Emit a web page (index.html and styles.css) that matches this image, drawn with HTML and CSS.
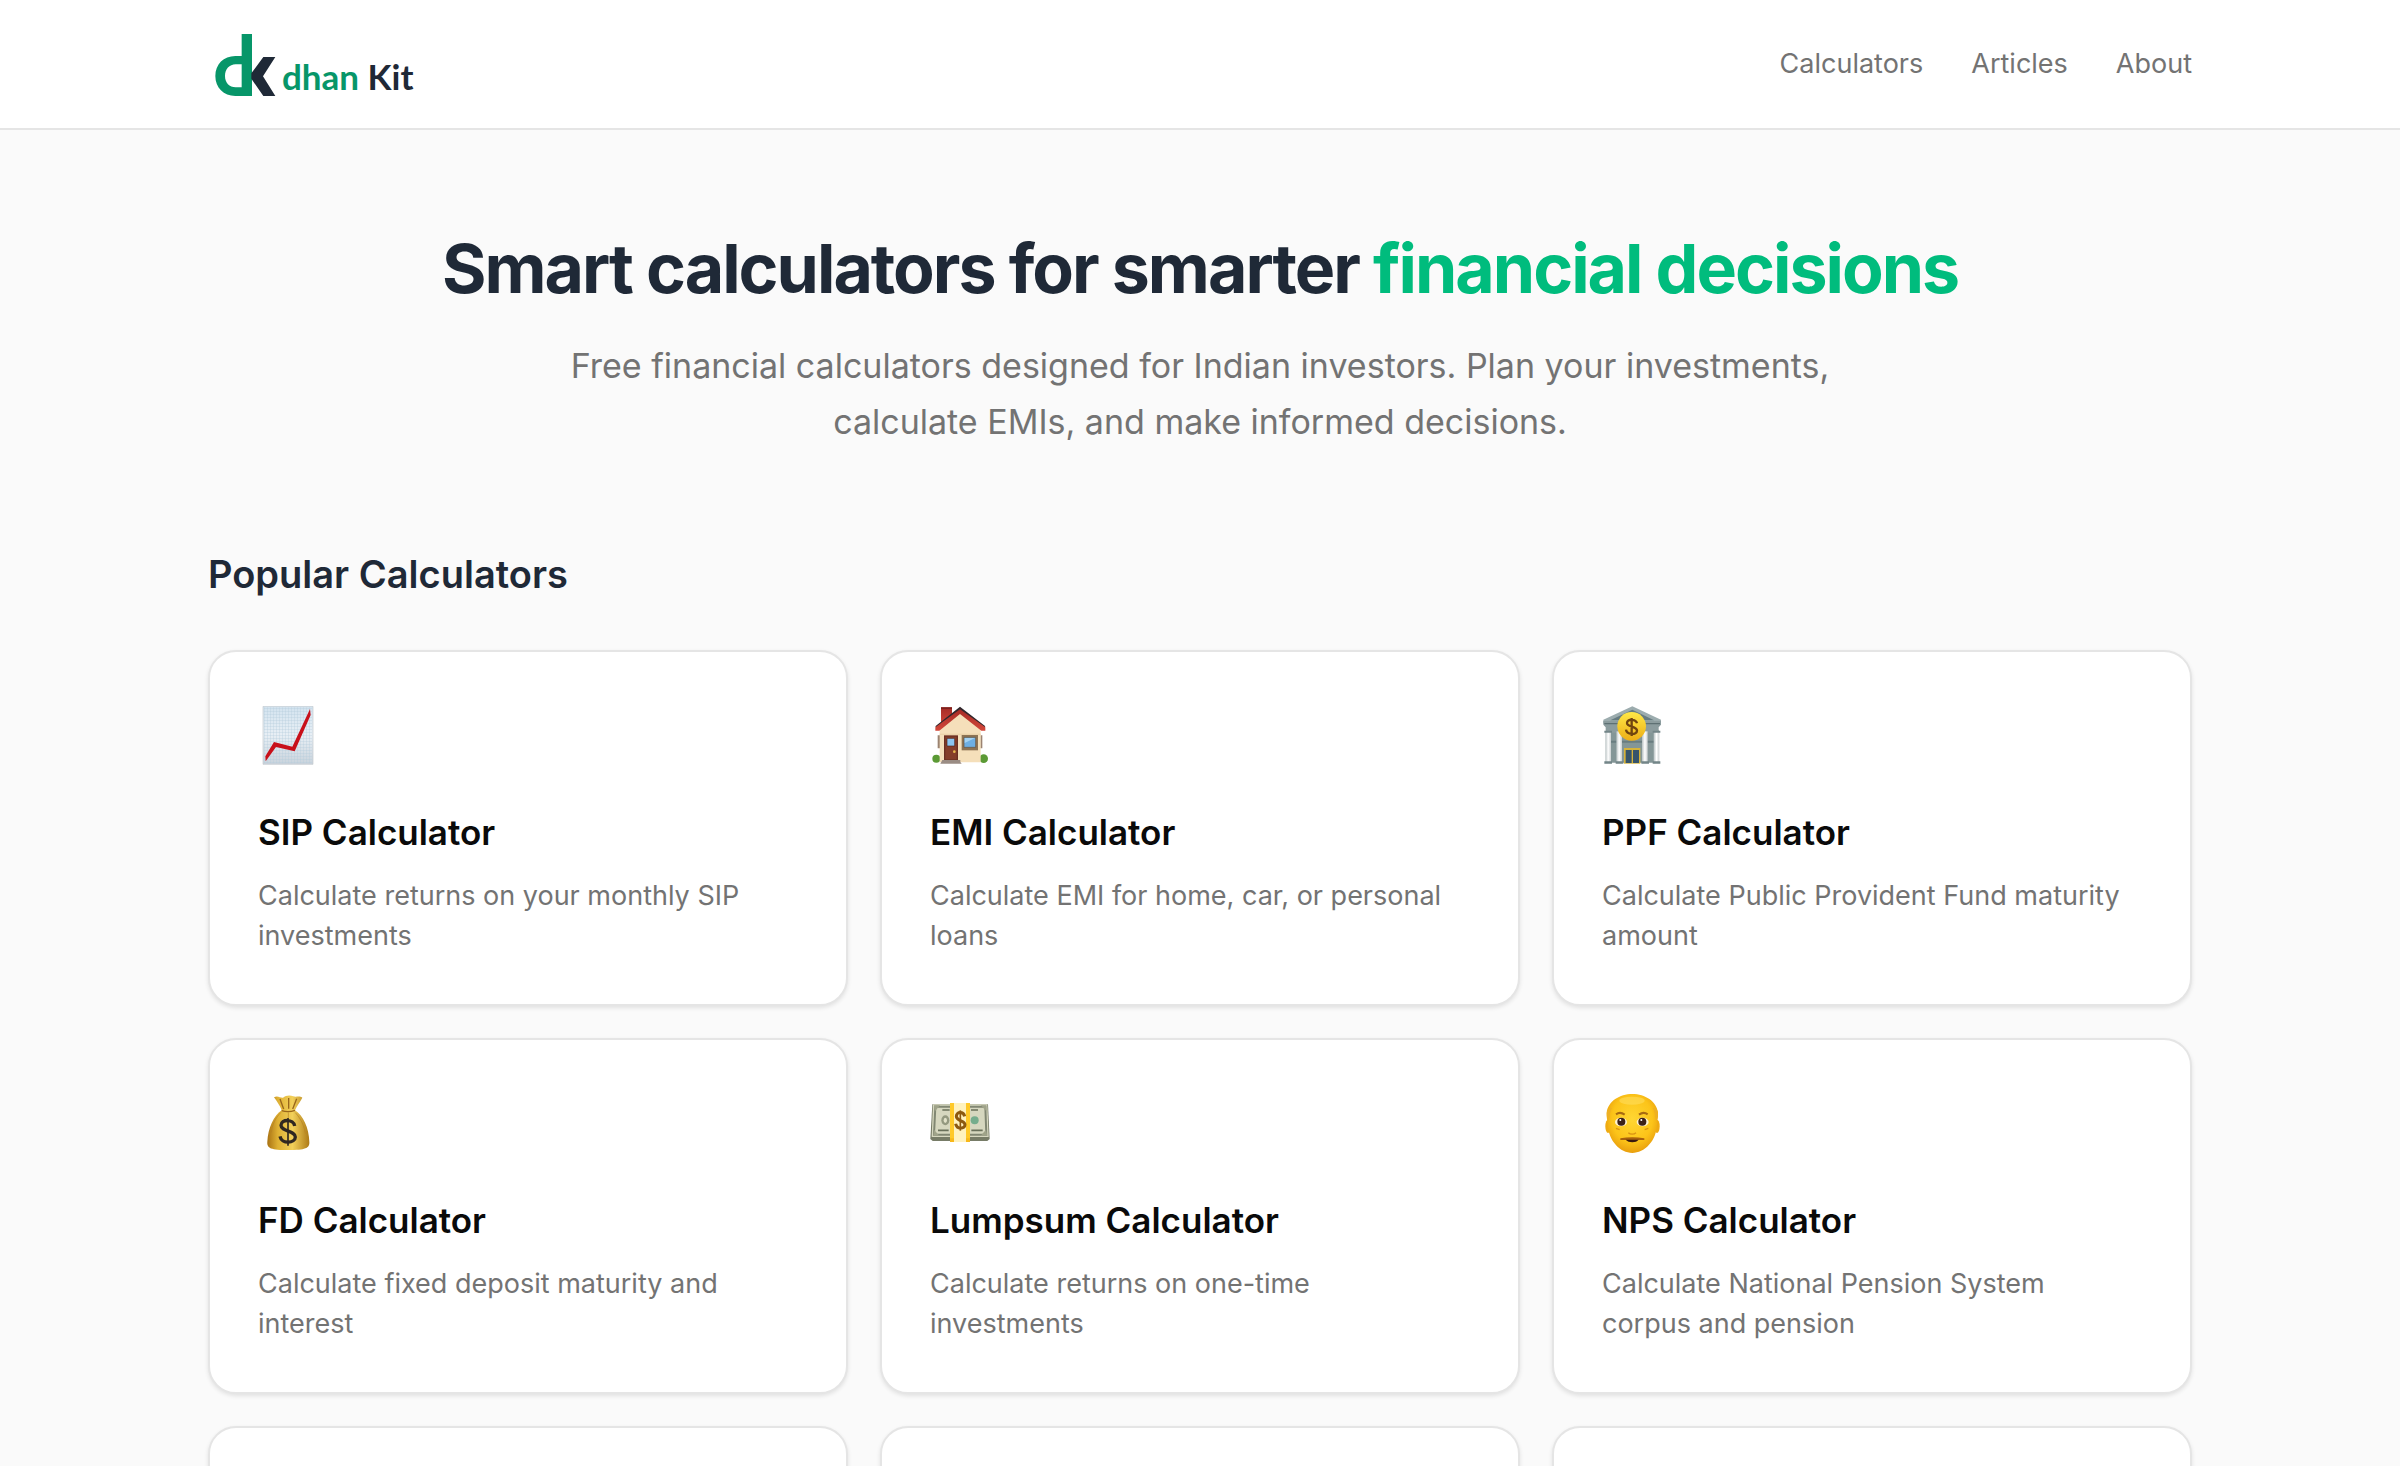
FILE: index.html
```html
<!DOCTYPE html>
<html lang="en">
<head>
<meta charset="utf-8">
<meta name="viewport" content="width=device-width, initial-scale=1">
<title>dhan Kit</title>
<link rel="stylesheet" href="styles.css">
</head>
<body>
<header class="site-header">
  <div class="container header-inner">
    <a class="logo" href="#" aria-label="dhan Kit">
      <svg class="logo-mark" viewBox="54 42 204 240" aria-hidden="true">
        <path fill="#079669" fill-rule="evenodd" d="M155 72H186V258H136C101 258 76 233 76 198S101 138 136 138H155ZM155 163H137C118 163 105 178 105 198S118 232 137 232H155Z"/>
        <path fill="#1f2937" d="M220 141H256L219 199L256 258H220L184 206V190Z"/>
      </svg>
      <span class="logo-text"><span class="logo-green">dhan</span> Kit</span>
    </a>
    <nav class="nav">
      <a href="#calculators">Calculators</a>
      <a href="#articles">Articles</a>
      <a href="#about">About</a>
    </nav>
  </div>
</header>
<main class="container">
  <section class="hero">
    <h1>Smart calculators for smarter <span class="accent">financial decisions</span></h1>
    <p>Free financial calculators designed for Indian investors. Plan your investments, calculate EMIs, and make informed decisions.</p>
  </section>
  <section id="calculators">
    <h2>Popular Calculators</h2>
    <div class="grid">
      <a class="card" href="#sip">
        <span class="icon"><svg viewBox="54 48 180 180" aria-hidden="true">
          <defs>
            <linearGradient id="paper" x2="0" y2="1"><stop offset="0" stop-color="#d3e3ef"/><stop offset=".5" stop-color="#e8eff5"/><stop offset="1" stop-color="#c9d3dc"/></linearGradient>
            <pattern id="lines" width="9" height="9" patternUnits="userSpaceOnUse"><path d="M0 0H9M0 0V9" stroke="#b3cddd" stroke-width="2"/></pattern>
          </defs>
          <path fill="url(#paper)" stroke="#c3c9cd" stroke-width="2" d="M69 49H219V223H69Z"/>
          <path fill="url(#lines)" d="M72 52H216V220H72Z"/>
          <path fill="#c8101a" d="M76 199L102 156L157 170L210 57L212 75L164 184L108 171L77 214Z"/>
        </svg></span>
        <h3>SIP Calculator</h3>
        <p>Calculate returns on your monthly SIP investments</p>
      </a>
      <a class="card" href="#emi">
        <span class="icon"><svg viewBox="60 48 180 180" aria-hidden="true">
          <defs><linearGradient id="roof" x2="0" y2="1"><stop offset="0" stop-color="#a52b25"/><stop offset="1" stop-color="#d2473a"/></linearGradient></defs>
          <path fill="url(#roof)" d="M93 52H126V90L93 108Z"/><path fill="#7d211d" d="M93 52H126V57H93Z"/>
          <g fill="#5b9a35"><circle cx="79" cy="206" r="12"/><circle cx="221" cy="206" r="13"/></g>
          <path fill="#9b8371" d="M83 136H90V175H83ZM211 136H217V175H211Z"/>
          <path fill="#f5dfba" d="M89 115L150 65L212 115V217H89Z"/>
          <path fill="#e9cfa5" d="M89 131H212V134H89Z"/>
          <path fill="#30272c" d="M76 109L150 50L226 109L220 115L150 62L82 117Z"/>
          <path fill="url(#roof)" d="M76 112L150 58L226 112V122H214L150 72L88 122H76Z"/>
          <path fill="#6b3022" d="M102 136H144V211H102Z"/><path fill="#853d29" d="M106 140H140V208H106Z"/>
          <path fill="#8cc5f0" stroke="#4d241d" stroke-width="2" d="M111 145H134V168H111Z"/><circle cx="133" cy="185" r="4" fill="#e9b84e"/>
          <path fill="#8d7353" d="M155 135H204V181H155Z"/><path fill="#6eafe3" stroke="#65503b" stroke-width="2" d="M162 142H197V172H162Z"/><path fill="#a4d2f2" d="M164 144H195L164 159Z"/>
          <path fill="#9a8c84" d="M97 210H151V216L155 221H91Z"/>
        </svg></span>
        <h3>EMI Calculator</h3>
        <p>Calculate EMI for home, car, or personal loans</p>
      </a>
      <a class="card" href="#ppf">
        <span class="icon"><svg viewBox="66 48 180 180" aria-hidden="true">
          <defs>
            <linearGradient id="column"><stop offset="0" stop-color="#b8c1c2"/><stop offset=".5" stop-color="#fff"/><stop offset="1" stop-color="#cbd0d1"/></linearGradient>
            <linearGradient id="coin" x2="0" y2="1"><stop offset="0" stop-color="#ffe846"/><stop offset="1" stop-color="#edae16"/></linearGradient>
          </defs>
          <path fill="#849697" d="M78 120H236V218H78Z"/><path fill="#697d80" d="M78 152H236V158H78Z"/>
          <path fill="#9cacae" d="M157 49L243 89V101H70V89Z"/><path fill="#667b80" d="M157 59L222 91H91Z"/>
          <path fill="#8c9c9e" d="M70 93H243V104L236 112V128H77V112L70 104Z"/><path fill="#5e7073" d="M73 99H240V103H73Z"/>
          <g fill="url(#column)"><path d="M76 124H93V220H76Z"/><path d="M109 124H126V220H109Z"/><path d="M186 124H203V220H186Z"/><path d="M221 124H238V220H221Z"/></g>
          <path fill="#738588" d="M73 214H96V221H73ZM107 214H130V221H107ZM184 214H207V221H184ZM218 214H241V221H218ZM73 122H96V128H73ZM218 122H241V128H218Z"/>
          <path fill="#d6b33b" d="M132 174H181V221H132Z"/><path fill="#36546b" d="M137 180H155V219H137ZM159 180H177V219H159Z"/>
          <circle cx="155" cy="109" r="43" fill="url(#coin)"/>
          <path fill="none" stroke="#70440f" stroke-width="7" d="M171 100C168 86 141 86 141 99S171 108 171 122S140 135 138 119M155 84V138"/>
        </svg></span>
        <h3>PPF Calculator</h3>
        <p>Calculate Public Provident Fund maturity amount</p>
      </a>
      <a class="card" href="#fd">
        <span class="icon"><svg viewBox="54 42 180 180" aria-hidden="true">
          <defs>
            <linearGradient id="sack"><stop offset="0" stop-color="#a97213"/><stop offset=".25" stop-color="#deb033"/><stop offset=".6" stop-color="#f2d05a"/><stop offset="1" stop-color="#ad7a17"/></linearGradient>
          </defs>
          <path fill="url(#sack)" d="M102 52C113 45 120 54 129 53C138 45 151 45 160 49C168 53 177 46 187 53C180 66 171 77 165 91C189 106 207 144 208 186C209 205 196 210 145 210S80 205 82 185C84 145 101 107 125 91C119 75 111 65 102 52Z"/>
          <path fill="none" stroke="#99671b" stroke-width="4" d="M125 92C137 96 152 96 165 91M120 57L131 87M146 54V86M170 56L158 87"/>
          <path fill="none" stroke="#b68222" stroke-width="2" d="M123 97C105 115 96 136 94 158M166 98C184 118 193 139 196 161M145 97V114"/>
          <path fill="none" stroke="#302821" stroke-width="10" d="M164 138C161 116 123 117 123 136S166 152 166 171S125 194 120 169"/><path stroke="#302821" stroke-width="5" d="M144 114V197"/>
        </svg></span>
        <h3>FD Calculator</h3>
        <p>Calculate fixed deposit maturity and interest</p>
      </a>
      <a class="card" href="#lumpsum">
        <span class="icon"><svg viewBox="60 42 180 180" aria-hidden="true">
          <path fill="#777c67" d="M67 73H234L239 177L232 183H68L61 177Z"/>
          <path fill="#d6d7bf" d="M69 73H232L236 171H65Z"/><path fill="none" stroke="#818773" stroke-width="6" d="M76 80H226L229 164H72Z"/>
          <path fill="#9fa389" d="M72 76H90L75 94ZM212 76H229V94ZM72 149L88 167H70ZM228 149L212 167H232Z"/>
          <ellipse cx="106" cy="121" rx="12" ry="15" fill="#949980"/><ellipse cx="106" cy="121" rx="5" ry="8" fill="#e2e2c9"/>
          <circle cx="194" cy="121" r="12" fill="#75ad8d"/><path stroke="#69705a" stroke-width="5" d="M97 90H119M183 90H204M84 151H116M184 151H218"/>
          <path fill="#f8b819" d="M120 69H180V186H120Z"/><path fill="#fff2be" d="M132 69H168V186H132Z"/><path fill="#ffc928" d="M120 69H132V175H120ZM168 69H180V175H168Z"/>
          <path fill="none" stroke="#8c5910" stroke-width="9" d="M164 109C161 94 139 94 139 109S165 121 165 134S140 149 137 131"/><path stroke="#8c5910" stroke-width="5" d="M151 91V152"/>
        </svg></span>
        <h3>Lumpsum Calculator</h3>
        <p>Calculate returns on one-time investments</p>
      </a>
      <a class="card" href="#nps">
        <span class="icon"><svg viewBox="66 42 180 180" aria-hidden="true">
          <defs><radialGradient id="skin" cy=".42" r=".6"><stop offset="0" stop-color="#ffd633"/><stop offset=".65" stop-color="#fcc419"/><stop offset="1" stop-color="#e79b0c"/></radialGradient></defs>
          <ellipse cx="84" cy="139" rx="8" ry="20" fill="#efab12"/><ellipse cx="231" cy="139" rx="8" ry="20" fill="#efab12"/>
          <path fill="url(#skin)" d="M80 98C84 64 119 42 157 42S230 64 234 98C235 112 232 119 231 133C230 183 193 219 157 219S85 183 83 133C82 119 79 112 80 98Z"/>
          <path fill="#eeb023" d="M81 94C85 85 91 83 96 85C88 95 91 108 86 124C81 113 79 103 81 94ZM233 94C230 85 223 83 218 85C226 95 224 108 229 124C234 113 235 103 233 94Z"/>
          <ellipse cx="156" cy="62" rx="38" ry="12" fill="#ffe268" opacity=".5"/>
          <path fill="none" stroke="#a86b11" stroke-width="6" d="M108 103C116 97 126 98 134 104M177 104C185 98 195 97 203 103"/>
          <ellipse cx="123" cy="126" rx="18" ry="13" fill="#fff4d5"/><ellipse cx="188" cy="126" rx="18" ry="13" fill="#fff4d5"/>
          <g fill="#3c2118"><circle cx="124" cy="125" r="12"/><circle cx="187" cy="125" r="12"/></g><g fill="#fff"><circle cx="121" cy="120" r="3"/><circle cx="184" cy="120" r="3"/></g>
          <path fill="none" stroke="#d99213" stroke-width="4" d="M145 158C151 164 162 164 168 158M108 145L119 149M205 145L194 149"/>
          <path fill="#a8610d" d="M121 175C145 171 169 171 193 175V180H121Z"/><path fill="#3a180f" d="M137 179H176C169 189 145 189 137 179Z"/>
        </svg></span>
        <h3>NPS Calculator</h3>
        <p>Calculate National Pension System corpus and pension</p>
      </a>
      <div class="card"></div>
      <div class="card"></div>
      <div class="card"></div>
    </div>
  </section>
</main>
</body>
</html>
```
FILE: styles.css
```css
* { box-sizing: border-box; }
html { scrollbar-width: none; }
body {
  margin: 0;
  background: #fafafa;
  color: #0a0a0a;
  font-family: Inter, "Liberation Sans", sans-serif;
}
h1, h2, h3, p { margin: 0; }
a { color: inherit; text-decoration: none; }
.container { max-width: 2048px; margin: 0 auto; padding: 0 32px; }
.site-header { background: #fff; border-bottom: 2px solid #e5e5e5; }
.header-inner { display: flex; align-items: center; justify-content: space-between; padding-top: 24px; padding-bottom: 24px; }
.logo { display: flex; align-items: flex-end; gap: 6px; }
.logo-mark { display: block; width: 68px; height: 80px; }
.logo-text { padding-bottom: 6px; font: 700 35px/44px Lato, sans-serif; color: #1f2937; }
.logo-green { color: #079669; }
.nav { display: flex; gap: 48px; font-size: 27px; line-height: 40px; color: #737373; }
.hero { padding: 96px 0; text-align: center; }
.hero h1 { font-size: 68px; line-height: 84px; font-weight: 700; letter-spacing: -2px; color: #1f2937; }
.accent { color: #00bc7d; }
.hero p { max-width: 1344px; margin: 28px auto 0; font-size: 34px; line-height: 56px; color: #737373; }
h2 { margin-bottom: 48px; font-size: 38px; line-height: 56px; font-weight: 600; color: #1f2937; }
.grid { display: grid; grid-template-columns: repeat(3, 1fr); gap: 32px; }
.card {
  min-height: 356px;
  padding: 48px;
  background: #fff;
  border: 2px solid #e5e5e5;
  border-radius: 28px;
  box-shadow: 0 2px 4px rgba(0, 0, 0, 0.1);
}
.icon { display: flex; align-items: center; height: 72px; margin-bottom: 32px; }
.icon svg { width: 60px; height: 60px; }
.card h3 { margin-bottom: 16px; font-size: 35px; line-height: 56px; font-weight: 600; }
.card p { padding-right: 12px; font-size: 27px; line-height: 40px; color: #737373; }
```
